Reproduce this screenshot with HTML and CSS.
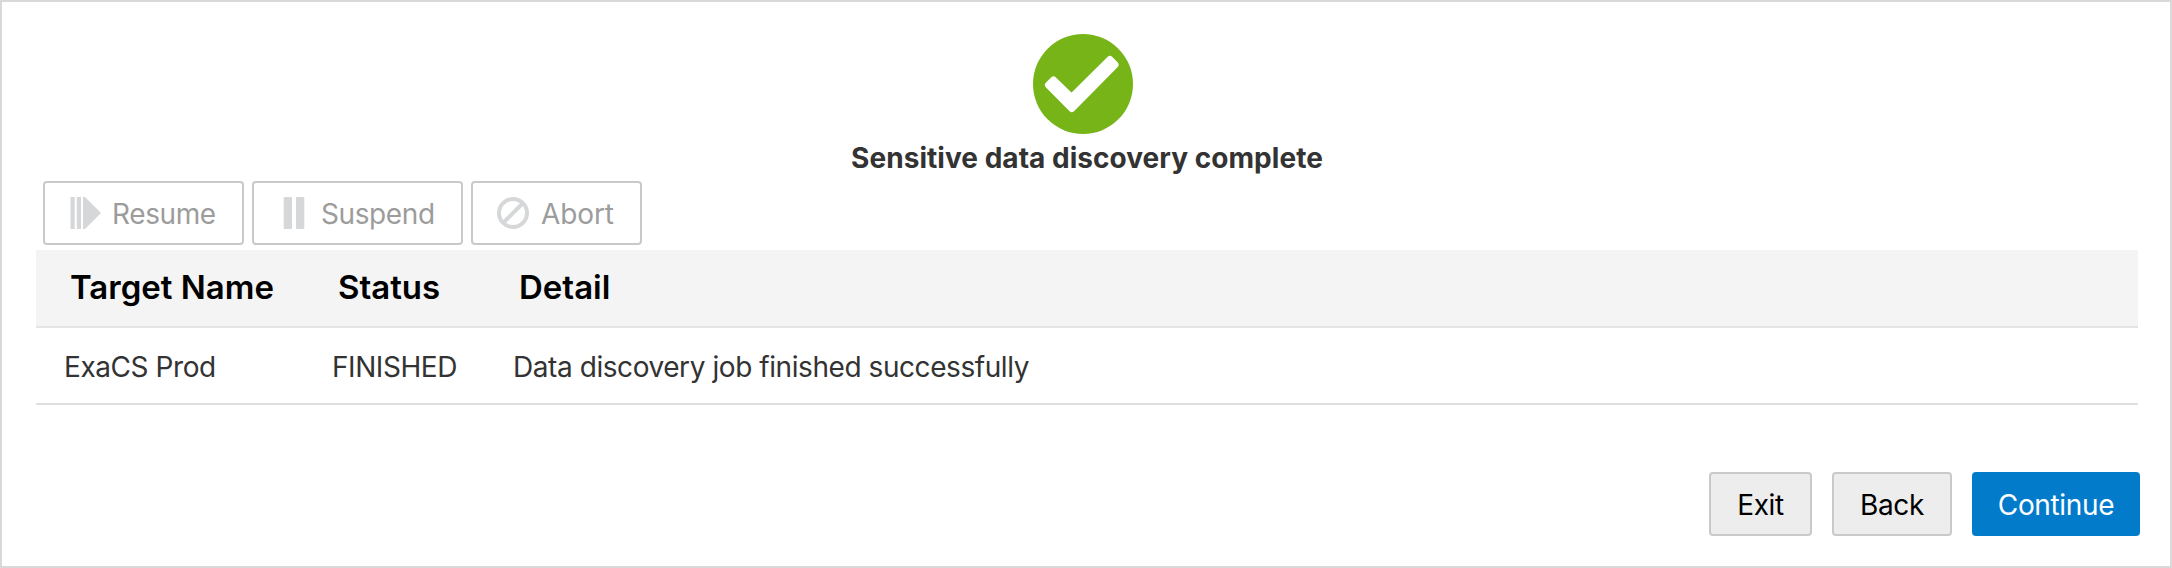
FILE: index.html
```html
<!DOCTYPE html>
<html lang="en">
<head>
<meta charset="utf-8">
<title>Sensitive data discovery</title>
<link rel="stylesheet" href="styles.css">
</head>
<body>
<main class="dialog">
  <header class="result">
    <svg class="result-icon" viewBox="0 0 100 100" aria-hidden="true">
      <circle cx="50" cy="50" r="50" fill="#76b417"/>
      <path d="M20.500 46 L38.600 63.600 L76.900 25.500 L82 30.800 L38.800 74.500 L15.500 51 Z" fill="#fff" stroke="#fff" stroke-width="7" stroke-linejoin="round"/>
    </svg>
    <h1 class="result-title">Sensitive data discovery complete</h1>
  </header>

  <div class="toolbar">
    <button class="tool resume" disabled>
      <svg class="tool-icon" viewBox="0 0 32 32" aria-hidden="true"><path d="M1.500 0h4.200v32H1.500zM7.800 0H12v32H7.800zM14 0h2l16 16L16 32h-2z"/></svg>
      <span>Resume</span>
    </button>
    <button class="tool suspend" disabled>
      <svg class="tool-icon" viewBox="0 0 32 32" aria-hidden="true"><rect x="5.700" width="8.300" height="32" rx="1"/><rect x="18" width="8.300" height="32" rx="1"/></svg>
      <span>Suspend</span>
    </button>
    <button class="tool abort" disabled>
      <svg class="tool-icon line" viewBox="0 0 32 32" aria-hidden="true"><circle cx="16" cy="16" r="14"/><path d="M6.500 25.500l19-19"/></svg>
      <span>Abort</span>
    </button>
  </div>

  <table class="jobs">
    <colgroup><col class="c-name"><col class="c-status"><col></colgroup>
    <thead><tr><th>Target Name</th><th>Status</th><th>Detail</th></tr></thead>
    <tbody><tr><td>ExaCS Prod</td><td>FINISHED</td><td>Data discovery job finished successfully</td></tr></tbody>
  </table>

  <footer class="actions">
    <button class="btn exit">Exit</button>
    <button class="btn back">Back</button>
    <button class="btn primary">Continue</button>
  </footer>
</main>
</body>
</html>
```
FILE: styles.css
```css
* { box-sizing: border-box; }
body { margin: 0; font-family: Inter, "Liberation Sans", sans-serif; font-size: 28px; color: #333; background: #fff; }
.dialog { width: 2172px; height: 568px; border: 2px solid #d9d9d9; display: flex; flex-direction: column; }
.result { height: 179px; padding-top: 32px; display: flex; flex-direction: column; align-items: center; }
.result-icon { width: 100px; height: 100px; margin-right: 6px; display: block; }
.result-title { margin: 6px 0 0 2px; font-size: 28px; line-height: 36px; font-weight: 700; white-space: nowrap; letter-spacing: .04px; }
.toolbar { display: flex; gap: 8px; padding-left: 41px; height: 69px; align-items: flex-start; }
button { font: inherit; margin: 0; white-space: nowrap; }
.tool { height: 64px; display: flex; align-items: center; padding: 0 0 0 24px; border: 2px solid #c9c9c9; border-radius: 4px; background: #fff; color: #9c9c9c; }
.tool-icon { width: 32px; height: 32px; margin-right: 11px; fill: #d5d7d9; flex: none; }
.tool-icon.line { fill: none; stroke: #d5d7d9; stroke-width: 4; margin-right: 12px; }
.tool span { letter-spacing: -.4px; padding-top: 2px; }
.resume { width: 201px; }
.suspend { width: 211px; }
.abort { width: 171px; }
.abort span { letter-spacing: -.1px; }
.jobs { width: 2102px; margin-left: 34px; border-collapse: separate; border-spacing: 0; table-layout: fixed; }
.c-name { width: 268px; }
.c-status { width: 181px; }
th, td { white-space: nowrap; text-align: left; }
th { height: 78px; padding: 0 0 3px 34px; background: #f4f4f4; border-bottom: 2px solid #e4e4e4; color: #000; font-size: 33px; font-weight: 600; }
td { height: 77px; padding: 2px 0 0 28px; border-bottom: 2px solid #dfdfdf; letter-spacing: -.43px; }
.actions { margin-top: 67px; padding-right: 30px; display: flex; justify-content: flex-end; gap: 20px; }
.btn { height: 64px; padding: 1px 0 0; border: 2px solid #c9c9c9; border-radius: 4px; background: #ededed; color: #000; text-align: center; letter-spacing: -.35px; }
.exit { width: 103px; }
.back { width: 120px; }
.primary { width: 168px; background: #027bcb; border-color: #027bcb; color: #fff; }
```
